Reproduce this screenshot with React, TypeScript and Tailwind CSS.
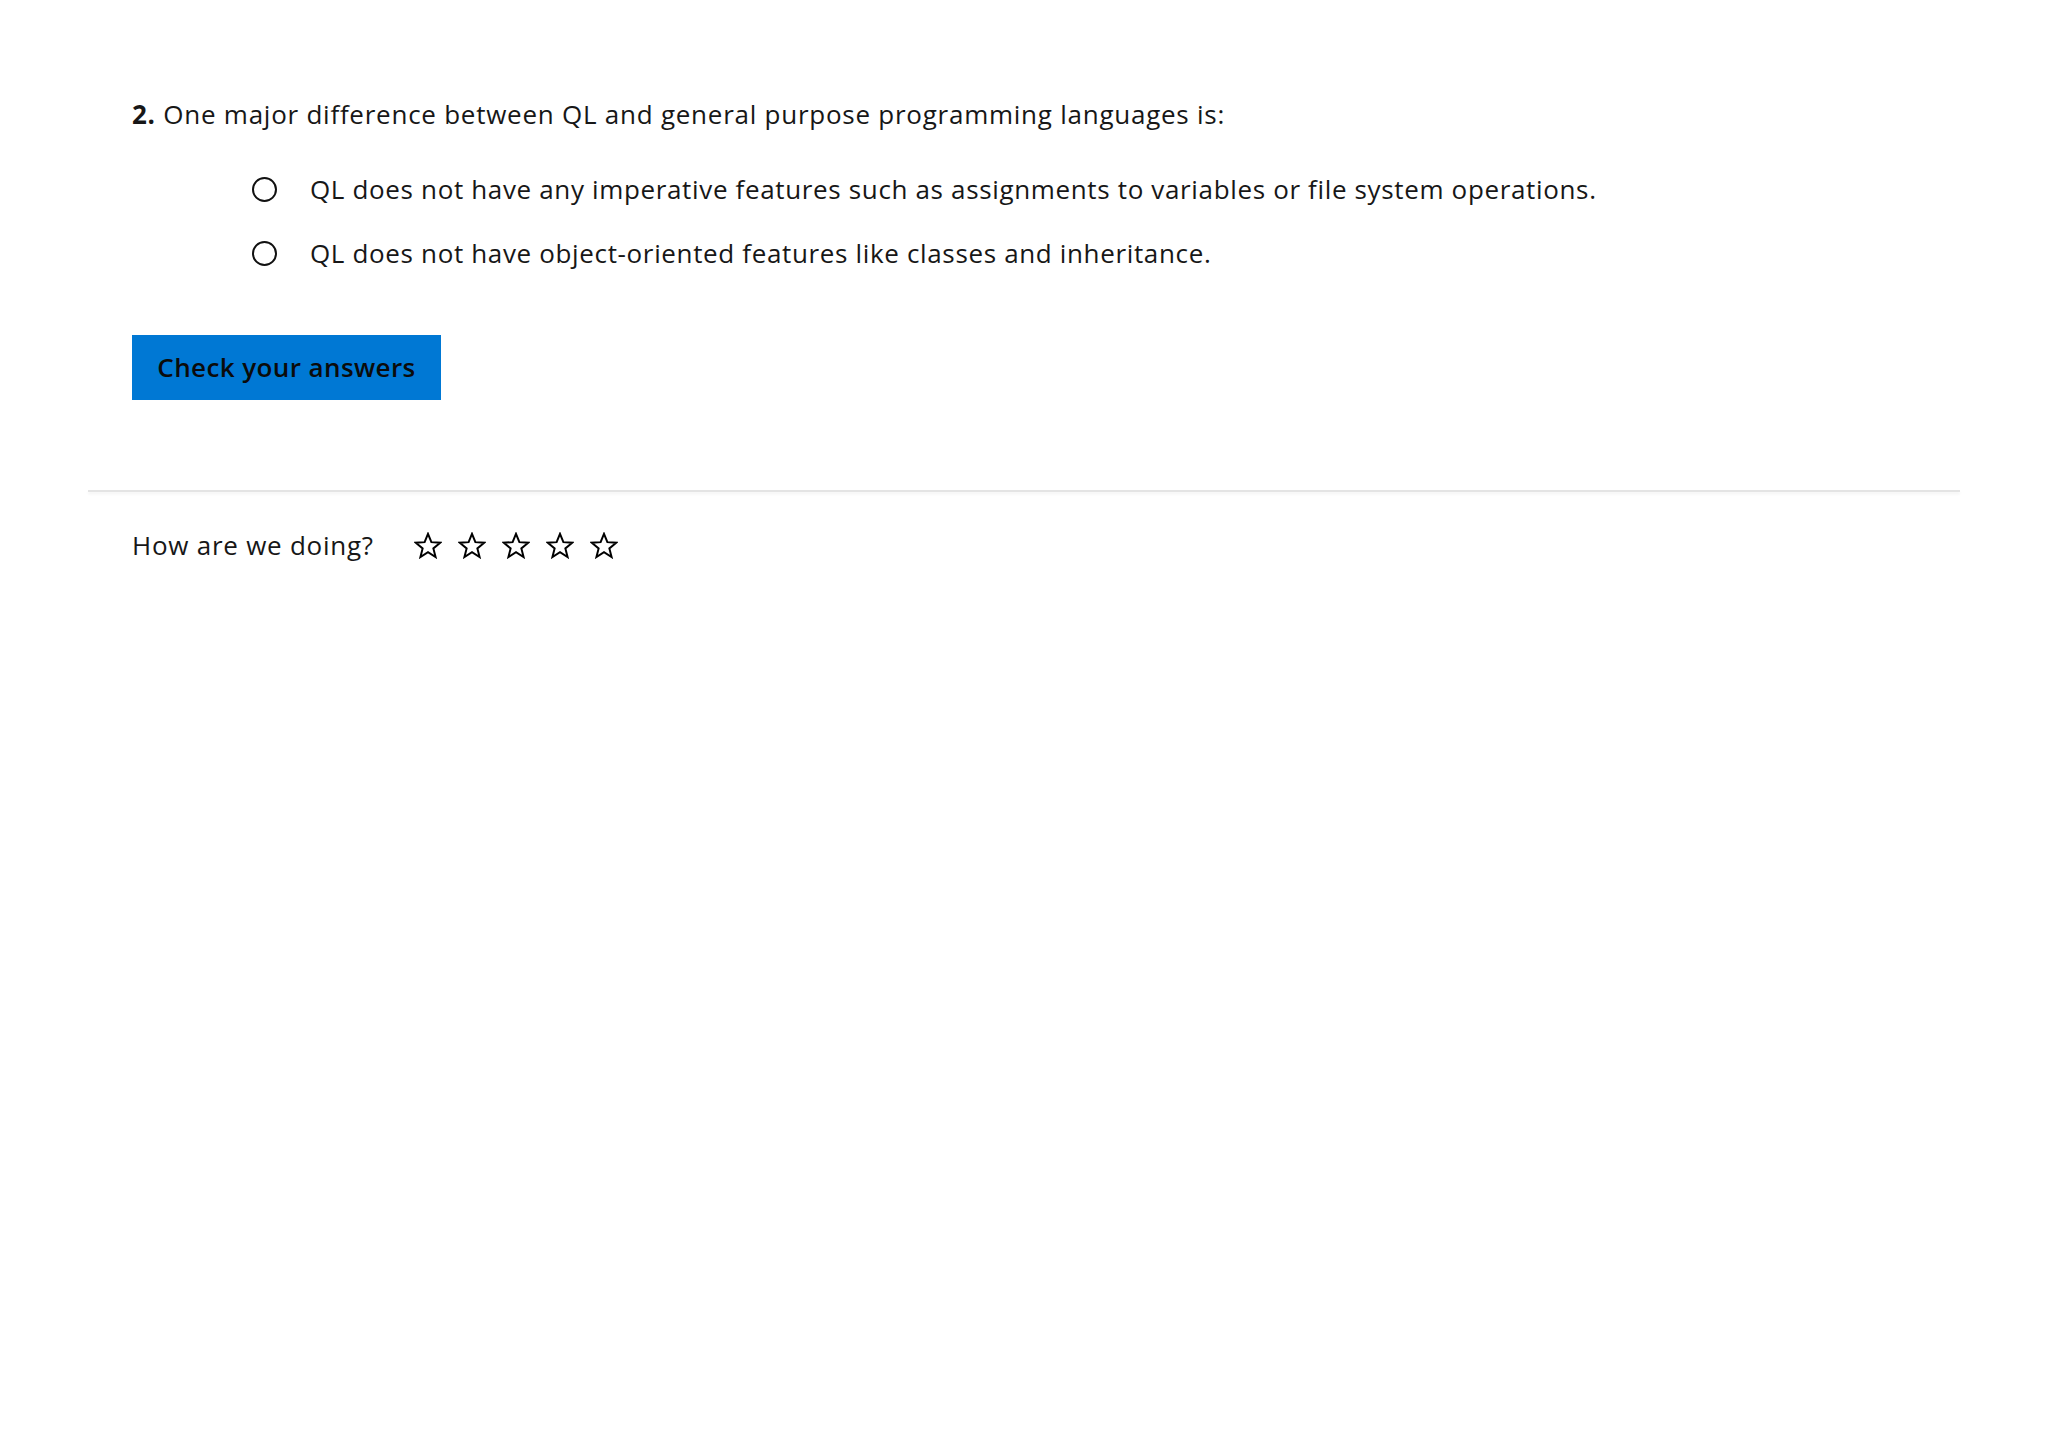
import React, { useState } from 'react';

const options = [
  'QL does not have any imperative features such as assignments to variables or file system operations.',
  'QL does not have object-oriented features like classes and inheritance.',
];

function Star() {
  return (
    <svg width="28" height="27" viewBox="0 0 24 23" fill="none" stroke="#000" strokeWidth="1.7" strokeLinejoin="miter">
      <path d="M12 1.5l2.9 7.1 7.6.5-5.9 4.9 1.9 7.4L12 17.3l-6.5 4.1 1.9-7.4-5.9-4.9 7.6-.5z" />
    </svg>
  );
}

export default function App() {
  const [selected, setSelected] = useState<number | null>(null);

  return (
    <div className="min-h-[1450px] bg-white text-[#171717]" style={{ fontFamily: '"Open Sans", "Noto Sans", sans-serif' }}>
      <div className="px-[88px] pt-[94px]">
        <div className="px-[44px]">
          <p className="text-[26px] leading-[40px] tracking-[0.75px]">
            <span className="font-bold">2.</span> One major difference between QL and general purpose programming languages is:
          </p>

          <div className="mt-[35px] ml-[120px] flex flex-col gap-[24px]">
            {options.map((opt, i) => (
              <label key={i} className="flex items-center h-[40px] cursor-pointer" onClick={() => setSelected(i)}>
                <span className="w-[25px] h-[25px] rounded-full border-[2px] border-[#111] flex items-center justify-center shrink-0">
                  {selected === i && <span className="w-[11px] h-[11px] rounded-full bg-[#171717]" />}
                </span>
                <span className="ml-[33px] text-[26px] tracking-[0.65px]">{opt}</span>
              </label>
            ))}
          </div>

          <button className="mt-[62px] w-[309px] h-[65px] bg-[#0078d4] text-[#0b0b0b] text-[26px] tracking-[0.4px] font-semibold">
            Check your answers
          </button>
        </div>

        <div className="mt-[90px] h-[2px] bg-[#e4e4e4] shadow-[0_2px_3px_rgba(0,0,0,0.06)]" />

        <div className="px-[44px] mt-[33px] flex items-center">
          <span className="text-[26px] leading-[40px] tracking-[0.75px]">How are we doing?</span>
          <div className="ml-[40px] flex items-center gap-[16px]">
            {[0, 1, 2, 3, 4].map((i) => (
              <Star key={i} />
            ))}
          </div>
        </div>
      </div>
    </div>
  );
}
